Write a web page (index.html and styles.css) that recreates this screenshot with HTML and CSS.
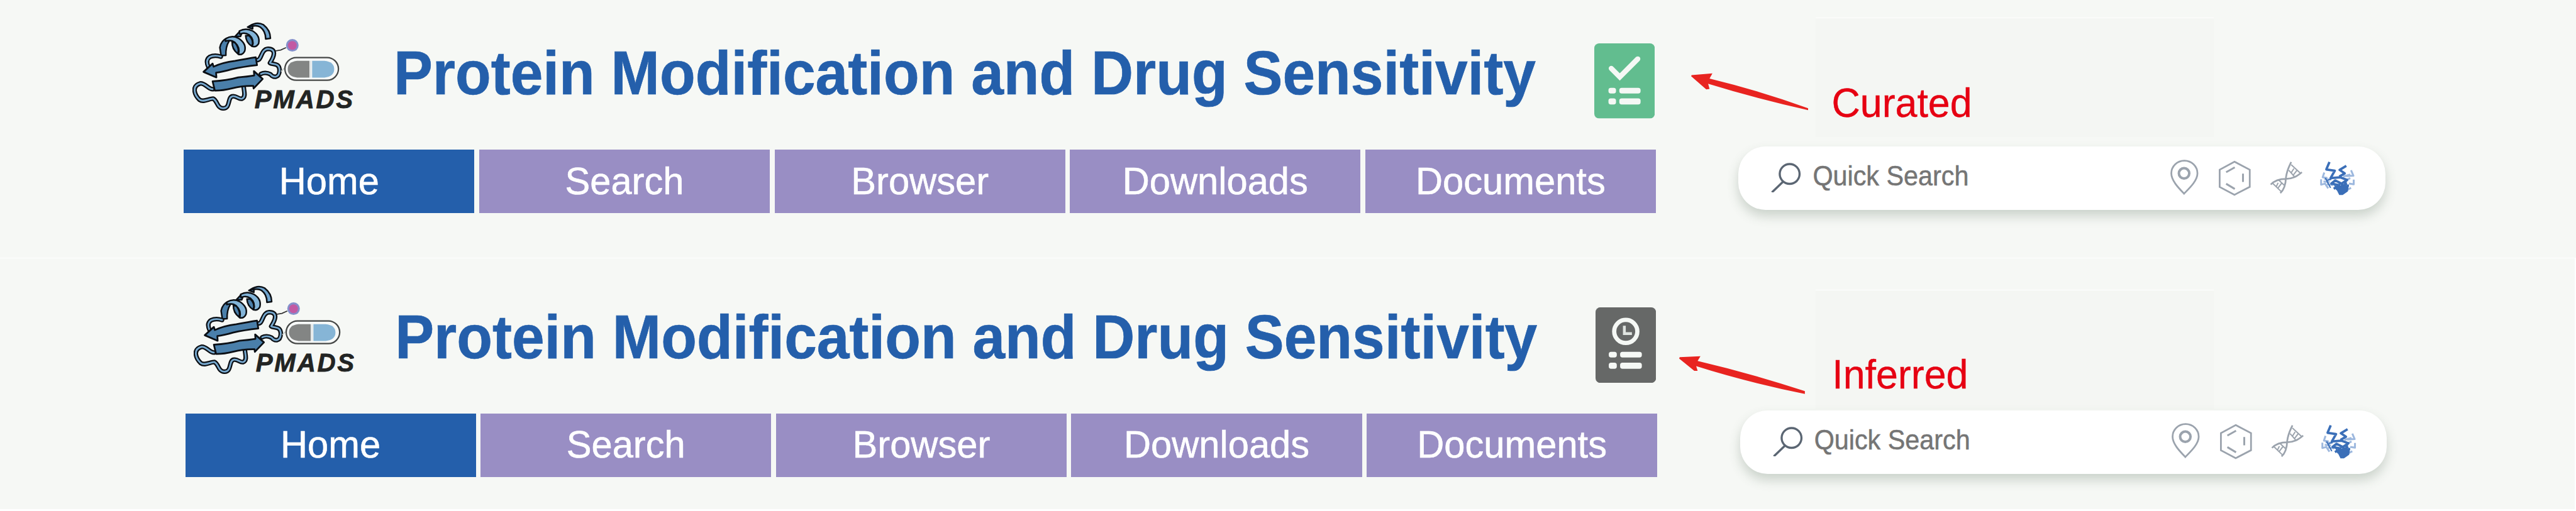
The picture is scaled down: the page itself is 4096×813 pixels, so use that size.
FILE: index.html
```html
<!DOCTYPE html>
<html lang="en">
<head>
<meta charset="utf-8">
<title>PMADS</title>
<link rel="stylesheet" href="styles.css">
</head>
<body>
<svg class="defs" aria-hidden="true">
  <defs>
    <symbol id="logo" viewBox="80 70 1020 580">
      <g stroke-linejoin="round" stroke-linecap="round" fill="none">
        <g stroke="#0b0f14" stroke-width="10">
          <path fill="#4a7faa" d="M262 292 L254 240 Q262 195 300 180 L312 200 Q290 235 292 290 Z"/>
          <path fill="#4a7faa" d="M350 170 L380 138 L400 130 L385 170 Z M430 110 L462 94 L462 122 Z"/>
          <path fill="#4a7faa" d="M332 205 Q330 250 368 280 Q380 250 352 210 Z M418 165 Q420 210 458 232 Q472 195 440 165 Z"/>
          <path fill="#82b4d8" d="M290 185 Q330 160 370 180 Q425 215 412 262 Q400 290 372 284 Q385 240 350 208 Q325 188 290 200 Z"/>
          <path fill="#82b4d8" d="M378 135 Q420 112 462 135 Q512 165 500 215 Q485 240 460 233 Q475 190 440 160 Q412 140 380 155 Z"/>
          <path fill="#6fa3cc" d="M440 105 Q490 72 530 95 Q575 130 575 182 L545 186 Q545 135 510 110 Q490 98 462 104 Z"/>
        </g>
        <g>
          <path stroke="#0b0f14" stroke-width="29" d="M260 298 Q220 285 190 300 Q160 320 182 365 M492 320 C520 320 515 250 560 248 C615 250 600 295 572 338 C590 350 632 335 633 385 C630 440 590 430 575 410 C555 400 530 400 515 408 M208 505 C180 505 165 468 130 468 C70 485 95 545 125 572 C150 590 185 565 212 565 C240 580 235 625 275 627 C325 625 300 555 335 550 C360 545 375 572 395 565 C420 555 408 520 405 490"/>
          <path stroke="#78aad0" stroke-width="11" d="M260 298 Q220 285 190 300 Q160 320 182 365 M492 320 C520 320 515 250 560 248 C615 250 600 295 572 338 C590 350 632 335 633 385 C630 440 590 430 575 410 C555 400 530 400 515 408 M208 505 C180 505 165 468 130 468 C70 485 95 545 125 572 C150 590 185 565 212 565 C240 580 235 625 275 627 C325 625 300 555 335 550 C360 545 375 572 395 565 C420 555 408 520 405 490"/>
        </g>
        <g fill="#4a7faa" stroke="#0b0f14" stroke-width="11">
          <path d="M150 395 L208 342 L214 362 Q270 335 350 325 Q430 310 482 302 L490 352 Q400 362 330 378 Q270 395 230 400 L232 430 Z"/>
          <path d="M208 455 Q300 450 370 430 Q430 425 472 418 L470 390 L526 440 L468 500 L466 484 Q400 482 330 500 Q270 515 222 514 Z"/>
        </g>
        <path stroke="#333" stroke-width="7" d="M610 261 L640 256 L672 242"/>
        <path stroke="#c3c8c5" stroke-width="8" d="M645 390 L660 375"/>
      </g>
      <circle cx="714" cy="226" r="40" fill="#8590cb"/>
      <circle cx="714" cy="227" r="28" fill="#c25aa3"/>
      <rect x="667" y="304" width="340" height="144" rx="72" fill="#f7f9f8" stroke="#454746" stroke-width="9"/>
      <path d="M745 325 H823 V431 H745 Q685 425 685 378 Q685 331 745 325 Z" fill="#838584"/>
      <path d="M840 325 H918 Q980 331 980 378 Q980 425 918 431 H840 Z" fill="#86b5d6"/>
      <path d="M831 325 V431" stroke="#dfe3e3" stroke-width="8"/>
      <text x="474" y="627" class="logo-text">PMADS</text>
    </symbol>
    <symbol id="tools" viewBox="120 75 1190 245">
      <g fill="none" stroke="#9ba3ad" stroke-width="11">
        <path d="M215 299 C190 272 134 220 134 170 A81 79 0 0 1 300 170 C300 220 240 272 215 299 Z"/>
        <circle cx="215" cy="170" r="33" stroke-width="16"/>
        <path d="M535 96 L632 147 V256 L535 306 L441 256 V147 Z"/>
        <path d="M482 163 L537 132 M589 172 V225 M482 236 L537 269" stroke-width="12"/>
        <path d="M895 98 C878 135 868 150 862 195 C860 245 850 275 826 295 M963 163 C930 190 905 205 862 205 C820 205 785 220 765 241"/>
        <path d="M895 115 L952 168 M880 150 L915 190 M912 140 L896 165 M932 150 L905 185 M778 234 L830 284 M815 212 L850 245 M812 230 L800 255 M835 232 L812 262" stroke-width="8"/>
      </g>
      <g fill="none" stroke-linejoin="round">
        <path stroke="#9db8de" stroke-width="12" d="M1105 165 L1095 195 L1125 200 M1085 208 V242 L1110 235 L1130 265 M1275 150 L1290 185 L1245 188 M1292 210 V240 L1262 235 M1270 200 L1240 215 M1275 262 L1250 275 M1100 222 L1140 226 M1122 238 L1160 245 M1105 205 L1150 210 M1225 190 L1270 178"/>
        <path stroke="#3b6fb8" stroke-width="15" d="M1138 98 L1118 145 L1172 153 L1145 200 L1205 195 L1250 212 L1215 235 L1175 215 L1150 235 L1200 245 L1165 268 M1245 122 L1202 148 L1235 170 L1200 190 M1245 205 L1235 250 L1195 225 M1190 262 L1250 235"/>
        <path stroke="#3b6fb8" stroke-width="8" d="M1112 200 L1125 225 L1145 262 M1165 230 L1185 275 M1205 255 L1262 250 M1125 215 L1150 205"/>
        <path fill="#3b6fb8" d="M1170 262 L1205 255 L1262 240 L1255 285 L1222 308 L1200 308 L1186 280 Z"/>
      </g>
    </symbol>
    <symbol id="lens" viewBox="0 0 64 64">
      <g fill="none" stroke="#5b6673" stroke-width="4.500">
        <circle cx="39.500" cy="25" r="21"/>
        <path d="M26 41 L2 64"/>
      </g>
    </symbol>
    <symbol id="curated" viewBox="0 0 128 159">
      <rect width="128" height="159" rx="10" fill="#62bd8f"/>
      <path d="M36 53 L54 71 L92 33" fill="none" stroke="#f5f8f5" stroke-width="11" stroke-linecap="round"/>
      <g fill="#f5f8f5">
        <rect x="30" y="94" width="16" height="12" rx="5"/><rect x="53" y="94" width="45" height="12" rx="5"/>
        <rect x="30" y="116.500" width="16" height="13" rx="5"/><rect x="53" y="116.500" width="45" height="13" rx="5"/>
      </g>
    </symbol>
    <symbol id="inferred" viewBox="0 0 128 160">
      <rect width="128" height="160" rx="10" fill="#666867"/>
      <circle cx="64" cy="51" r="24.500" fill="none" stroke="#f5f8f5" stroke-width="9"/>
      <path d="M61 39 V55.500 H77" fill="none" stroke="#dfe4e0" stroke-width="6"/>
      <g fill="#f5f8f5">
        <rect x="28" y="94" width="17" height="12" rx="5"/><rect x="52" y="94" width="46" height="12" rx="5"/>
        <rect x="28" y="117" width="17" height="13" rx="5"/><rect x="52" y="117" width="46" height="13" rx="5"/>
      </g>
    </symbol>
  </defs>
</svg>

<main class="page">
  <section class="panel panel-curated">
    <div class="main">
      <header class="brand">
        <svg class="logo"><use href="#logo"/></svg>
        <h1 class="title">Protein Modification and Drug Sensitivity</h1>
        <svg class="badge"><use href="#curated"/></svg>
      </header>
      <nav class="nav">
        <a class="tab active"><span>Home</span></a>
        <a class="tab"><span>Search</span></a>
        <a class="tab"><span>Browser</span></a>
        <a class="tab"><span>Downloads</span></a>
        <a class="tab"><span>Documents</span></a>
      </nav>
    </div>
    <aside class="side">
      <div class="note"><span class="note-label">Curated</span></div>
      <div class="search">
        <svg class="lens"><use href="#lens"/></svg>
        <span class="placeholder">Quick Search</span>
        <svg class="tools"><use href="#tools"/></svg>
      </div>
    </aside>
    <svg class="arrow" viewBox="0 0 248 80"><path d="M0 7 L1 4.500 L45 1 L39 12 Q150 39 248 75 V79 Q140 55 36 23 L39 34 L32 35 Z"/></svg>
  </section>
  <section class="panel panel-inferred">
    <div class="main">
      <header class="brand">
        <svg class="logo"><use href="#logo"/></svg>
        <h1 class="title">Protein Modification and Drug Sensitivity</h1>
        <svg class="badge"><use href="#inferred"/></svg>
      </header>
      <nav class="nav">
        <a class="tab active"><span>Home</span></a>
        <a class="tab"><span>Search</span></a>
        <a class="tab"><span>Browser</span></a>
        <a class="tab"><span>Downloads</span></a>
        <a class="tab"><span>Documents</span></a>
      </nav>
    </div>
    <aside class="side">
      <div class="note"><span class="note-label">Inferred</span></div>
      <div class="search">
        <svg class="lens"><use href="#lens"/></svg>
        <span class="placeholder">Quick Search</span>
        <svg class="tools"><use href="#tools"/></svg>
      </div>
    </aside>
    <svg class="arrow" viewBox="0 0 267 83"><path d="M0 6 L1 3 L45 1 L39 11 Q150 37 266 75 V81 Q140 55 36 22 L39 32 L32 32 Z"/></svg>
  </section>
</main>
</body>
</html>
```
FILE: styles.css
```css
:root { --u: 0.75142px; }
* { box-sizing: border-box; }
body {
  margin: 0;
  background: #fff;
  font-family: "Liberation Sans", Arial, sans-serif;
  overflow: hidden;
}
.defs { position: absolute; width: 0; height: 0; }
.page { width: 4096px; height: 813px; overflow: hidden; }

.panel {
  --dx: 0;
  --dy: 0;
  position: relative;
  display: flex;
  height: calc(545 * var(--u));
  padding-left: calc((389 + var(--dx)) * var(--u));
  padding-top: calc(var(--dy) * var(--u));
  background: #f6f8f5;
}
.panel-inferred {
  --dx: 3;
  --dy: 11.5;
  width: calc(5448 * var(--u));
  height: calc(531 * var(--u));
  margin-top: calc(2 * var(--u));
}

.main { width: calc(3115 * var(--u)); flex: none; }
.brand {
  display: flex;
  align-items: flex-start;
  height: calc(317 * var(--u));
  padding-left: calc(17.7 * var(--u));
}
.logo {
  flex: none;
  width: calc(340 * var(--u));
  height: calc(193.3 * var(--u));
  margin-top: calc(43.3 * var(--u));
}
.logo-text {
  font: italic bold 161px "Liberation Sans", Arial, sans-serif;
  letter-spacing: 11px;
  fill: #222423;
  stroke: #222423;
  stroke-width: 3px;
}
.title {
  flex: none;
  width: calc(2540 * var(--u));
  margin: calc(89.1 * var(--u)) 0 0 calc(86.3 * var(--u));
  font-size: calc(123.6 * var(--u));
  line-height: calc(138 * var(--u));
  font-weight: bold;
  color: #245fab;
  -webkit-text-stroke: 0.7px #245fab;
  white-space: nowrap;
  transform: scaleY(1.06);
  transform-origin: 0 calc(111.9 * var(--u));
}
.badge {
  flex: none;
  width: calc(128 * var(--u));
  height: calc(159 * var(--u));
  margin-top: calc(92 * var(--u));
}
.nav {
  display: grid;
  grid-template-columns: repeat(5, 1fr);
  column-gap: calc(10 * var(--u));
  height: calc(134 * var(--u));
}
.tab {
  display: flex;
  align-items: center;
  justify-content: center;
  padding-bottom: calc(3 * var(--u));
  background: #998ec4;
  color: #fff;
  -webkit-text-stroke: 0.6px #fff;
  font-size: calc(79.4 * var(--u));
  line-height: 1;
}
.tab.active { background: #245fab; }
.tab span { transform: scaleY(1.03); }

.side { width: calc(1370 * var(--u)); margin-left: calc(175 * var(--u)); padding-top: calc(37 * var(--u)); flex: none; }
.note {
  width: calc(842 * var(--u));
  height: calc(253 * var(--u));
  margin-left: calc(163 * var(--u));
  padding: calc(133.500 * var(--u)) 0 0 calc(34 * var(--u));
  border-top: calc(2 * var(--u)) solid #fff;
  background: #f4f6f3;
}
.note-label {
  display: block;
  font-size: calc(83.5 * var(--u));
  line-height: calc(93.5 * var(--u));
  color: #e60012;
  -webkit-text-stroke: 0.4px #e60012;
  transform: scaleY(1.04);
  transform-origin: 0 81%;
}
.search {
  position: relative;
  display: flex;
  width: calc(1369 * var(--u));
  height: calc(134.500 * var(--u));
  margin-top: calc(20 * var(--u));
  padding-left: calc(69 * var(--u));
  border-radius: calc(58 * var(--u));
  background: #fff;
  box-shadow: 0 calc(13 * var(--u)) calc(24 * var(--u)) rgba(60, 85, 65, 0.23);
}
.lens {
  flex: none;
  width: calc(64 * var(--u));
  height: calc(64 * var(--u));
  margin-top: calc(33.500 * var(--u));
}
.placeholder {
  flex: none;
  width: calc(756 * var(--u));
  margin: calc(35 * var(--u)) 0 0 calc(24 * var(--u));
  font-size: calc(55 * var(--u));
  line-height: calc(61.700 * var(--u));
  color: #757575;
  -webkit-text-stroke: 0.5px #757575;
  white-space: nowrap;
  transform: scaleY(1.06);
  transform-origin: 0 81%;
}
.tools {
  flex: none;
  width: calc(396.700 * var(--u));
  height: calc(81.700 * var(--u));
  margin-top: calc(25 * var(--u));
  margin-left: calc(-2 * var(--u));
}
.arrow {
  position: absolute;
  left: calc(3578.500 * var(--u));
  top: calc(155 * var(--u));
  width: calc(248 * var(--u));
  height: calc(80 * var(--u));
  fill: #e82420;
}

.panel-inferred .badge { height: calc(160 * var(--u)); }
.panel-inferred .side { padding-top: calc(54.500 * var(--u)); }
.panel-inferred .note { margin-left: calc(160 * var(--u)); padding-left: calc(35 * var(--u)); padding-top: calc(132.500 * var(--u)); }
.panel-inferred .search { margin-top: calc(2.500 * var(--u)); }
.panel-inferred .arrow {
  left: calc(3553.500 * var(--u));
  top: calc(206 * var(--u));
  width: calc(267 * var(--u));
  height: calc(83 * var(--u));
}
```
